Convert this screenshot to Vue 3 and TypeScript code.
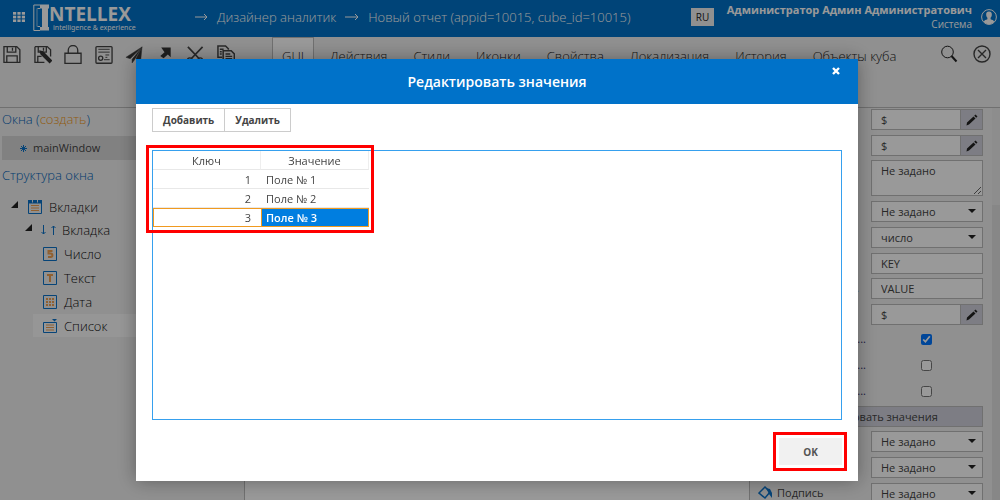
<script setup lang="ts">
import { ref } from 'vue'

type Kind = 'edit' | 'area' | 'select' | 'text' | 'check' | 'button'
interface Field { kind: Kind; value: string; label: string; visible?: boolean; dots?: boolean }

const tabs = ['GUI', 'Действия', 'Стили', 'Иконки', 'Свойства', 'Локализация', 'История', 'Объекты куба']
const tools = ['save', 'saveas', 'lock', 'report', 'send', 'arrow', 'cut', 'copy']
const toolNames = ['Сохранить', 'Сохранить как', 'Блокировка', 'Отчет', 'Отправить', 'Открыть', 'Вырезать', 'Копировать']
const fields = ref<Field[]>([
  { kind: 'edit', value: '$', label: 'Видимость' },
  { kind: 'edit', value: '$', label: 'Доступность' },
  { kind: 'area', value: 'Не задано', label: 'Описание' },
  { kind: 'select', value: 'Не задано', label: 'Источник' },
  { kind: 'select', value: 'число', label: 'Тип ключа' },
  { kind: 'text', value: 'KEY', label: 'Поле ключа' },
  { kind: 'text', value: 'VALUE', label: 'Поле значения', dots: true },
  { kind: 'edit', value: '$', label: 'Значение' },
  { kind: 'check', value: 'yes', label: 'Поиск', dots: true },
  { kind: 'check', value: '', label: 'Множественный', dots: true },
  { kind: 'check', value: '', label: 'Обязательный', dots: true },
  { kind: 'button', value: 'Редактировать значения', label: '' },
  { kind: 'select', value: 'Не задано', label: 'Шрифт' },
  { kind: 'select', value: 'Не задано', label: 'Цвет' },
  { kind: 'select', value: 'Не задано', label: 'Подпись', visible: true },
])
const tree = [
  { icon: 'number', text: 'Число' },
  { icon: 'text', text: 'Текст' },
  { icon: 'date', text: 'Дата' },
  { icon: 'list', text: 'Список' },
]
const rows = ref([
  { key: 1, value: 'Поле № 1' },
  { key: 2, value: 'Поле № 2' },
  { key: 3, value: 'Поле № 3' },
])
const selected = ref(3)
function addRow() {
  const key = rows.value.length + 1
  rows.value.push({ key, value: `Поле № ${key}` })
}
function removeRow() {
  rows.value = rows.value.filter(r => r.key !== selected.value)
}
</script>

<template>
  <div class="app">
    <header class="top">
      <button class="plain apps" aria-label="Меню">
        <svg width="12" height="10" viewBox="0 0 12 10" fill="#fff">
          <template v-for="y in 3" :key="y"><rect v-for="x in 3" :key="x" :x="(x - 1) * 4.4" :y="(y - 1) * 3.7" width="3.2" height="2.7" /></template>
        </svg>
      </button>
      <div class="logo">
        <svg width="16" height="28" viewBox="0 0 16 28">
          <path d="M7 1H.8v25.500H7M7 4.500H4.500M7 22.500H4.500" fill="none" stroke="#fff" stroke-width="1" />
          <path d="M4 4.500v18" stroke="#fff" stroke-width=".6" />
          <path d="M7 .5h9v4h-1V23h1v3.500H7V23h2V4.500H7z" fill="#fff" />
        </svg>
        <div class="brand"><b>NTELLEX</b><small>intelligence &amp; experience</small></div>
      </div>
      <nav class="crumbs">
        <svg class="go" width="13" height="8" viewBox="0 0 13 8"><path d="M0 4h12M9 1l3 3-3 3" /></svg>
        <a href="#">Дизайнер аналитик</a>
        <svg class="go" width="14" height="8" viewBox="0 0 14 8"><path d="M0 4h13M10 1l3 3-3 3" /></svg>
        <a href="#">Новый отчет (appid=10015, cube_id=10015)</a>
      </nav>
      <button class="lang">RU</button>
      <div class="user"><b>Администратор Админ Администратович</b><span>Система</span></div>
      <svg class="avatar" width="16" height="16" viewBox="0 0 16 16">
        <circle cx="8" cy="8" r="7.400" fill="none" stroke="#fff" />
        <path d="M8 2.500c2.300 0 3 1.500 2.800 3.400-.1 1.300-.7 2.200-1.200 2.800v1.500c1.500.6 3 .9 3.600 2.200C12 14.300 10 15.200 8 15.200s-4-.9-5.200-2.800c.6-1.300 2.100-1.600 3.600-2.200V8.700C5.900 8.100 5.300 7.200 5.200 5.900 5 4 5.700 2.500 8 2.500z" fill="#fff" />
      </svg>
    </header>

    <div class="toolbar">
      <div class="tools">
        <button v-for="(t, i) in tools" :key="t" class="plain" :aria-label="toolNames[i]">
          <svg width="18" height="19" viewBox="0 0 19 20" fill="none" stroke="#444" stroke-width="1.400">
            <template v-if="t === 'save'"><path d="M1 1.700h13.500l3.300 3.300v13.300H1zM4.500 2v5.500h9V2M10 3v3M4 18v-6.500h11V18" /></template>
            <template v-else-if="t === 'saveas'"><path d="M1 1.700h13l3.500 3.300v7M11 18.300H1V1.700M4.500 2v5.500h8.500V2M4 18v-6h4M10 3v3" /><path d="M6.500 6.500l3 .8L18.500 16.500l-2 2L7.500 9.500z" fill="#333" stroke="#333" /></template>
            <template v-else-if="t === 'lock'"><path d="M1 8.700h17v10.600H1zM4.500 8.500V5.500a5 5 0 0 1 10 0v3" /></template>
            <template v-else-if="t === 'report'"><rect x="1" y="1.700" width="17" height="17.500" rx="1" /><path d="M3.500 4.500h12M3.500 7.500h12M11 10.500h4M11 13h2M9.500 15.500h6" stroke-width="1" /><circle cx="6" cy="14" r="2.200" /></template>
            <template v-else-if="t === 'send'"><path d="M18 2L1 13l4.500 1.500zM18 2l-1.500 15-5-2.500zM18 2L7.500 15v4l3-4" fill="#333" stroke-width=".5" /></template>
            <template v-else-if="t === 'arrow'"><path d="M5.500 2.500H15.500v10.500l-3-3-4.500 4L4.500 11.500l4.500-4z" fill="#333" stroke="none" /></template>
            <template v-else-if="t === 'cut'"><path d="M2 2l12 12.500M17.500 2L5.500 14.500" stroke-width="1.800" /><circle cx="4" cy="16" r="2.500" /><circle cx="15" cy="16" r="2.500" /></template>
            <template v-else><path d="M5.500 13H1V1h8l3 3v1M3 4.500H7M3 7h2M3 9.500h2" stroke-width="1.600" /><path d="M6.500 6H15l3.300 3.500V18.500H6.500z" stroke-width="1.600" /><path d="M9 9.500h5M9 12h7M9 14.500h7" /></template>
          </svg>
        </button>
      </div>
      <div class="tabs" role="tablist">
        <button v-for="(t, i) in tabs" :key="t" role="tab" class="tab" :class="{ on: i === 0 }" :aria-selected="i === 0">{{ t }}</button>
      </div>
      <div class="end">
        <button class="plain" aria-label="Поиск"><svg width="18" height="18" viewBox="0 0 18 18" fill="none" stroke="#222"><circle cx="7.500" cy="7" r="5.800" /><path d="M11.500 11l5 5.500" stroke-width="2" /></svg></button>
        <button class="plain" aria-label="Закрыть"><svg width="18" height="18" viewBox="0 0 18 18" fill="none" stroke="#444" stroke-width="1.400"><circle cx="9" cy="9" r="8" /><path d="M5 5l8 8M13 5l-8 8" /></svg></button>
      </div>
    </div>

    <main class="work">
      <aside class="left">
        <h2>Окна (<a href="#">создать</a>)</h2>
        <div class="window">
          <svg width="7" height="7" viewBox="0 0 7 7"><path d="M3.500 0v7M0 3.500h7M1 1l5 5M6 1L1 6" stroke="#0b72c8" fill="none" /></svg>
          <span>mainWindow</span>
        </div>
        <h2>Структура окна</h2>
        <div class="node root">
          <svg class="caret" width="7" height="7" viewBox="0 0 7 7"><path d="M7 0v7H0z" fill="#222" /></svg>
          <svg width="14" height="14" viewBox="0 0 14 14"><path d="M.5 3h13v10.500H.5z" fill="none" stroke="#0b72c8" /><path d="M0 0h4v3H0zM5 0h4v3H5zM10 0h4v3h-4z" fill="#0b72c8" /><path d="M3 5.500h8M3 8h8M3 10.500h8" stroke="#f0a050" /></svg>
          <span>Вкладки</span>
        </div>
        <div class="node sub">
          <svg class="caret" width="7" height="7" viewBox="0 0 7 7"><path d="M7 0v7H0z" fill="#222" /></svg>
          <svg width="15" height="10" viewBox="0 0 15 10"><path d="M2.500 0v9M.5 7l2 2 2-2M12.500 10V1M10.500 3l2-2 2 2" fill="none" stroke="#0b72c8" /></svg>
          <span>Вкладка</span>
        </div>
        <div v-for="n in tree" :key="n.icon" class="node leaf" :class="{ active: n.icon === 'list' }">
          <svg width="14" height="14" viewBox="0 0 14 14">
            <path :d="n.icon === 'list' ? 'M.5 3.500h13v10H.5z' : 'M.5 .5h13v13H.5z'" fill="none" stroke="#0b72c8" />
            <path v-if="n.icon === 'number'" d="M9.500 4H5.500v2.500h2.200c2.300 0 2.300 3.500 0 3.500H5" fill="none" stroke="#f0a050" stroke-width="2" />
            <path v-else-if="n.icon === 'text'" d="M4 4h6M7 4v7" stroke="#f0a050" stroke-width="2" />
            <path v-else-if="n.icon === 'date'" d="M3 4h8M3 7h8M3 10h8" stroke="#f0a050" stroke-width="2" stroke-dasharray="2 1" />
            <template v-else><path d="M3 6h8M3 8.500h8M3 11h8" stroke="#f0a050" /><path d="M9 0h5l-2.500 2.500z" fill="#0b72c8" /></template>
          </svg>
          <span>{{ n.text }}</span>
        </div>
      </aside>
      <section class="canvas"></section>
      <aside class="right">
        <div class="props">
          <div v-for="(f, i) in fields" :key="i" class="prop" :class="f.kind">
            <label v-if="f.kind !== 'button'" :for="'f' + i" :class="{ shown: f.visible }" :aria-label="f.label">
              <template v-if="f.visible">
                <svg width="15" height="14" viewBox="0 0 15 14"><path d="M1 7l6-6 5 5-5 6z" fill="none" stroke="#0b72c8" stroke-width="1.500" /><path d="M8 2l4 1 2 4v5l-3-4z" fill="#0b72c8" /></svg>{{ f.label }}
              </template>
              <template v-else-if="f.dots">...</template>
            </label>
            <div v-if="f.kind === 'edit'" class="combo">
              <input :id="'f' + i" v-model="f.value" type="text" />
              <button aria-label="Изменить"><svg width="12" height="12" viewBox="0 0 12 12" fill="#222"><path d="M1 8.500L7.500 2.500l2 2L3 10.500.5 11.500zM8.200 1.800L9.500.5l2 2-1.300 1.300z" /></svg></button>
            </div>
            <textarea v-else-if="f.kind === 'area'" :id="'f' + i" v-model="f.value"></textarea>
            <div v-else-if="f.kind === 'select'" class="pick">
              <select :id="'f' + i" v-model="f.value"><option>{{ f.value }}</option></select>
            </div>
            <input v-else-if="f.kind === 'text'" :id="'f' + i" v-model="f.value" type="text" />
            <input v-else-if="f.kind === 'check'" :id="'f' + i" type="checkbox" :checked="f.value === 'yes'" />
            <button v-else class="wide">{{ f.value }}</button>
          </div>
        </div>
        <div class="track"><i></i></div>
      </aside>
    </main>

    <div class="shade">
      <section class="modal" role="dialog" aria-labelledby="dlg">
        <div class="head">
          <h1 id="dlg">Редактировать значения</h1>
          <button class="plain x" aria-label="Закрыть"><svg width="8" height="8" viewBox="0 0 8 8"><path d="M1 1l6 6M7 1L1 7" stroke="#fff" stroke-width="2.400" /></svg></button>
        </div>
        <div class="body">
          <div class="acts">
            <button @click="addRow">Добавить</button><button @click="removeRow">Удалить</button>
          </div>
          <div class="sheet">
            <table>
              <thead><tr><th>Ключ</th><th>Значение</th></tr></thead>
              <tbody>
                <tr v-for="r in rows" :key="r.key" :class="{ sel: r.key === selected }" @click="selected = r.key">
                  <td class="key">{{ r.key }}</td><td>{{ r.value }}</td>
                </tr>
              </tbody>
            </table>
            <div class="mark"></div>
          </div>
          <div class="foot"><div class="okbox"><button class="ok">OK</button><div class="mark"></div></div></div>
        </div>
      </section>
    </div>
  </div>
</template>

<style>
body { margin: 0; overflow: hidden; }
</style>
<style scoped>
* { box-sizing: border-box; }
.app { display: flex; flex-direction: column; height: 100vh; overflow: hidden; background: #f0f0f0; color: #444; font: 400 11px/18px "Open Sans", "Noto Sans", sans-serif; }
button, input, select, textarea { font: inherit; color: inherit; margin: 0; border-radius: 0; }
button { padding: 0; cursor: pointer; }
svg { display: block; flex: none; }
a { color: inherit; text-decoration: none; }
.plain { border: 0; background: none; }
.top { flex: none; display: flex; align-items: center; height: 37px; padding: 0 3px 0 7px; background: #0072c8; color: #fff; }
.apps { width: 26px; height: 26px; display: flex; align-items: center; justify-content: center; padding-right: 14px; padding-left: 12px; margin-top: -4px; }
.logo { display: flex; width: 162px; margin-top: -1px; }
.brand { display: flex; flex-direction: column; }
.brand b { font-size: 19px; line-height: 20px; font-weight: 700; }
.brand small { font: 7px/8px "Noto Sans", sans-serif; padding-left: 4px; white-space: nowrap; }
.crumbs { flex: 1; display: flex; align-items: center; gap: 9px; font-size: 13px; font-weight: 300; white-space: nowrap; margin-top: -3px; }
.go { fill: none; stroke: #fff; }
.lang { width: 23px; height: 18px; border: 0; background: #f0f0f0; font-size: 10px; color: #222; margin-top: -3px; }
.user { width: 258px; display: flex; flex-direction: column; align-items: flex-end; font-size: 10px; line-height: 14px; white-space: nowrap; padding-bottom: 4px; }
.user b { font-size: 11px; font-weight: 700; }
.avatar { margin: -3px 0 0 9px; }
.toolbar { flex: none; display: flex; height: 71px; border-bottom: 1px solid #bbb; }
.tools { display: flex; justify-content: space-between; width: 272px; padding: 8px 37px 0 3px; align-items: flex-start; }
.tabs { flex: 1; display: flex; align-items: flex-start; white-space: nowrap; }
.tab { height: 71px; padding: 0 12px 35px; border: 1px solid transparent; border-bottom: 0; background: none; font-size: 13px; font-weight: 300; color: #222; }
.tab.on { background: #fff; border-color: #bbb; margin-right: 3px; padding: 0 9px 35px; }
.end { display: flex; gap: 15px; padding: 8px 9px 0 0; align-items: flex-start; }
.work { flex: 1; display: flex; min-height: 0; }
.left { width: 244px; padding-top: 1px; }
h2 { margin: 0; padding-left: 2px; font-size: 13px; line-height: 20px; font-weight: 300; color: #0064b8; }
h2 a { color: #f39a1c; }
.window { display: flex; align-items: center; gap: 6px; height: 24px; margin: 7px 0 5px 2px; padding-left: 18px; background: #d8d8d8; }
.node { display: flex; align-items: center; gap: 7px; height: 23px; font-size: 13px; font-weight: 300; color: #111; }
.root { margin-top: 10px; padding-left: 11px; }
.sub { padding-left: 25px; height: 24px; gap: 6px; }
.sub .caret + svg, .root .caret + svg { margin-left: 3px; }
.caret { margin-top: -5px; }
.leaf { height: 24px; margin-left: 33px; padding-left: 10px; }
.leaf.active { background: #fbfbfb; height: 23px; }
.canvas { flex: 1; background: #fff; border-left: 1px solid #bbb; border-right: 1px solid #bbb; }
.right { width: 250px; display: flex; overflow: hidden; }
.props { flex: 1; display: grid; align-content: start; padding: 1px 9px 0 8px; grid-template-rows: 26px 25px 41px 26px 26px 25px 26px 25px 26px 26px 25px 25px 26px 26px 26px; }
.prop { display: flex; align-items: flex-start; }
.prop > label { flex: 1; line-height: 20px; color: #336; text-align: right; padding-right: 4px; height: 20px; }
.prop.text > label { padding-right: 12px; }
.prop > label.shown { display: flex; align-items: center; gap: 4px; color: inherit; }
.combo, .pick, .text > input, textarea { width: 112px; }
.combo { display: flex; }
.prop input[type=text], select, textarea { height: 21px; padding: 0 9px; border: 1px solid #bbb; background: #fff; min-width: 0; outline: 0; }
.combo input { flex: 1; }
.combo button { width: 22px; border: 1px solid #bbb; border-left: 0; background: #d0d1dc; display: flex; align-items: center; justify-content: center; }
textarea { display: block; height: 36px; padding: 2px 9px; line-height: 16px; }
.pick { position: relative; }
select { appearance: none; width: 100%; }
.pick::after { content: ""; position: absolute; right: 7px; top: 8px; border: 4px solid transparent; border-top-color: #222; border-bottom: 0; pointer-events: none; }
.check label { margin-right: 55px; padding-right: 0; }
.check input { width: 11px; height: 11px; margin: 5px 51px 0 0; }
.wide { flex: 1; height: 21px; border: 1px solid #bbb; background: #d0d1dc; text-align: center; }
.track { width: 8px; background: #e2e2e2; }
.track i { display: block; height: 97px; background: #ececec; }
.shade { position: fixed; inset: 0; padding: 59px 142px 0 136px; background: rgba(0, 0, 0, .4); }
.modal { background: #fff; box-shadow: 0 0 18px rgba(0, 0, 0, .35); }
.head { position: relative; height: 45px; background: #0072c9; color: #fff; display: flex; align-items: center; justify-content: center; }
h1 { margin: 0; font-size: 14px; line-height: 20px; font-weight: 600; }
.x { position: absolute; right: 18px; top: 8px; }
.body { padding: 4px 16px 16px; }
.acts { display: flex; }
.acts button { height: 24px; padding: 0 10px; border: 1px solid #ccc; background: #fff; font-size: 10px; font-weight: 700; }
.acts button + button { border-left: 0; }
.sheet { position: relative; height: 270px; margin-top: 18px; border: 1px solid #36a0ee; }
table { border-collapse: separate; border-spacing: 0; width: 216px; table-layout: fixed; line-height: 17px; }
th, td { height: 19px; padding: 0 5px; border-bottom: 1px solid #e8e8e8; font-weight: 400; text-align: left; }
th { text-align: center; border-right: 1px solid #eee; }
td.key { text-align: right; padding-right: 10px; }
.sel td { border: 1px solid #f09a20; border-right: 0; background: #fff; padding-left: 4px; }
.sel td + td { border-right: 1px solid #f09a20; background: #007ee0; color: #fff; font-weight: 600; }
.mark { position: absolute; border: 3px solid red; pointer-events: none; }
.sheet .mark { left: -7px; top: -6px; width: 228px; height: 88px; }
.foot { display: flex; justify-content: flex-end; padding-top: 18px; }
.okbox { position: relative; }
.ok { display: block; width: 63px; height: 27px; border: 0; background: #f1f1f1; color: #555; font-size: 10px; font-weight: 700; }
.okbox .mark { inset: -6px -5px -6px -6px; }
</style>
